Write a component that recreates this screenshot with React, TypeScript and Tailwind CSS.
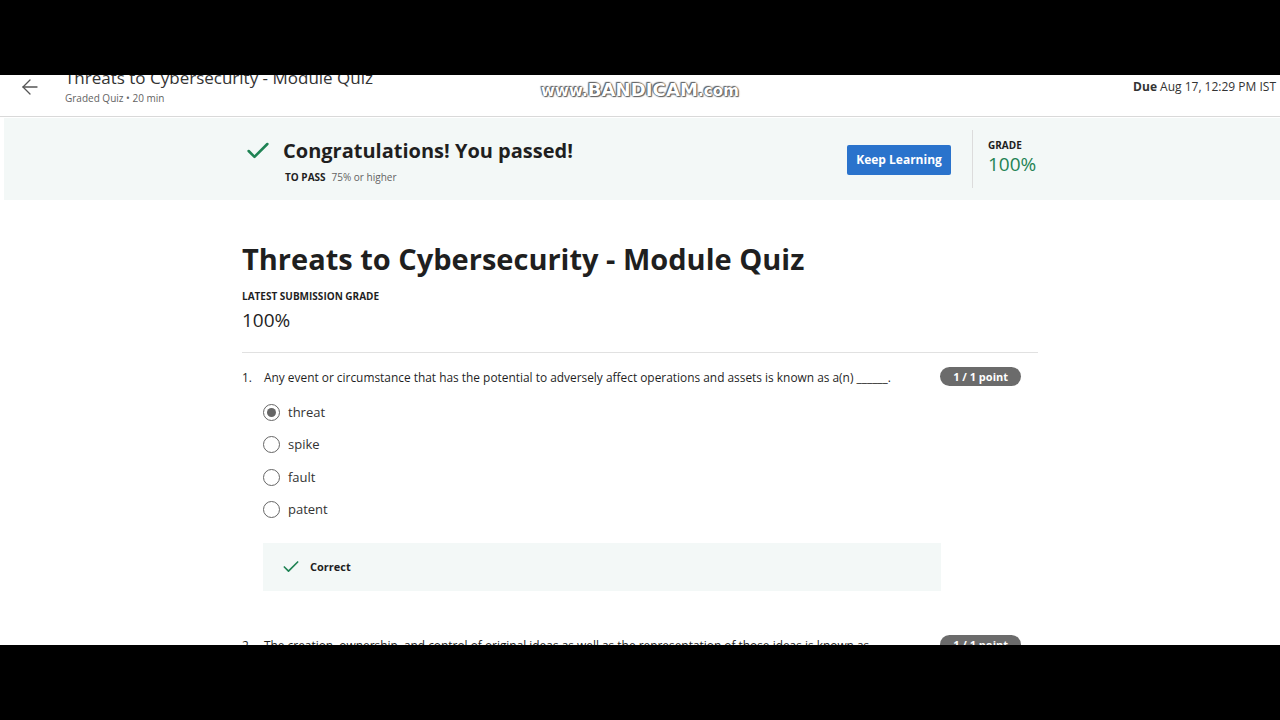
import { ArrowLeft, Check } from 'lucide-react';

const options = ['threat', 'spike', 'fault', 'patent'];

const Radio = ({ checked }: { checked: boolean }) => (
  <span className="flex h-[17px] w-[17px] items-center justify-center rounded-full border-[1.5px] border-[#666]">
    {checked && <span className="h-[9px] w-[9px] rounded-full bg-[#666]" />}
  </span>
);

const App = () => {
  return (
    <div className="flex h-[720px] w-[1280px] flex-col bg-black font-['Open_Sans',sans-serif] text-[#1f1f1f]">
      <div className="h-[75px] shrink-0 bg-black" />

      <div className="relative h-[570px] shrink-0 overflow-hidden bg-white">
        {/* top header, its upper part is cut by the recording */}
        <header className="-mt-[11px] flex h-[53px] items-center border-b border-[#d9d9d9] pb-[7px] pl-[18px] pr-[4px]">
          <ArrowLeft size={24} strokeWidth={1.3} className="text-[#555]" />
          <div className="ml-[23px] flex flex-col">
            <span className="text-[17px] leading-[22px] text-[#333]">Threats to Cybersecurity - Module Quiz</span>
            <span className="mt-[1px] text-[10px] leading-[16px] text-[#636363]">Graded Quiz • 20 min</span>
          </div>
          <div className="ml-auto text-[12px] text-[#333]">
            <span className="font-bold">Due</span> Aug 17, 12:29 PM IST
          </div>
        </header>

        {/* recorder watermark */}
        <div className="absolute left-[541px] top-[1px] font-['DejaVu_Sans',sans-serif] text-[18px] font-bold tracking-[0.1px] text-white [text-shadow:0_0_1px_#555,0_0_2px_#555,1px_1px_1px_#666,-1px_-1px_1px_#666]">
          <span className="text-[15px]">www.</span>BANDICAM<span className="text-[15px]">.com</span>
        </div>

        {/* passed banner */}
        <section className="ml-[4px] mt-[1px] h-[82px] bg-[#f3f8f7]">
          <div className="mx-auto flex h-full w-[796px] items-center pt-[6px]">
            <Check size={28} strokeWidth={2.2} className="-mt-[22px] text-[#1f8354]" />
            <div className="ml-[11px] -mt-[3px] flex flex-col">
              <h2 className="text-[20px] font-bold leading-[28px] text-[#1f1f1f]">Congratulations! You passed!</h2>
              <div className="mt-[5px] flex items-center text-[10px]">
                <span className="ml-[2px] font-bold">TO PASS</span>
                <span className="ml-[6px] text-[#636363]">75% or higher</span>
              </div>
            </div>
            <button className="ml-auto -mt-[4px] h-[30px] w-[104px] rounded-[2px] bg-[#2a73cc] text-[12px] font-bold text-white">
              Keep Learning
            </button>
            <div className="ml-[21px] -mt-[6px] h-[58px] w-px bg-[#dcdcdc]" />
            <div className="ml-[15px] mr-[1px] w-[51px] -mt-[9px] flex flex-col">
              <span className="text-[10px] font-bold leading-[13px]">GRADE</span>
              <span className="text-[19px] leading-[24px] text-[#1f8354]">100%</span>
            </div>
          </div>
        </section>

        {/* quiz content */}
        <main className="mx-auto w-[796px] pt-[40px]">
          <h1 className="text-[29px] font-bold leading-[38px] text-[#1f1f1f]">Threats to Cybersecurity - Module Quiz</h1>
          <div className="mt-[11px] text-[10px] font-bold leading-[14px]">LATEST SUBMISSION GRADE</div>
          <div className="mt-[4px] text-[19px] leading-[26px]">100%</div>
          <hr className="mt-[19px] border-[#e1e1e1]" />

          <div className="mt-[14px] flex items-start">
            <div className="flex text-[11.9px] leading-[20px] text-[#1f1f1f]">
              <span className="w-[22px]">1.</span>
              <span>Any event or circumstance that has the potential to adversely affect operations and assets is known as a(n) ______.</span>
            </div>
            <span className="ml-auto mr-[17px] shrink-0 rounded-full bg-[#6b6b6b] px-[13px] text-[11px] font-bold leading-[19px] text-white">1 / 1 point</span>
          </div>

          <div className="ml-[21px] mt-[16px] flex flex-col gap-[13.4px]">
            {options.map((o, i) => (
              <label key={o} className="flex h-[19px] items-center">
                <Radio checked={i === 0} />
                <span className="ml-[8px] text-[13px] text-[#333]">{o}</span>
              </label>
            ))}
          </div>

          <div className="ml-[21px] mt-[24px] flex h-[48px] w-[678px] items-center bg-[#f3f8f7] pl-[18px]">
            <Check size={20} strokeWidth={2} className="text-[#1f8354]" />
            <span className="ml-[9px] text-[11px] font-bold">Correct</span>
          </div>

          <div className="mt-[44px] flex items-start">
            <div className="flex text-[11.9px] leading-[20px] text-[#1f1f1f]">
              <span className="w-[22px]">2.</span>
              <span>The creation, ownership, and control of original ideas as well as the representation of those ideas is known as ______.</span>
            </div>
            <span className="ml-auto mr-[17px] shrink-0 rounded-full bg-[#6b6b6b] px-[13px] text-[11px] font-bold leading-[19px] text-white">1 / 1 point</span>
          </div>
        </main>
      </div>

      <div className="flex-1 bg-black" />
    </div>
  );
};

export default App;
